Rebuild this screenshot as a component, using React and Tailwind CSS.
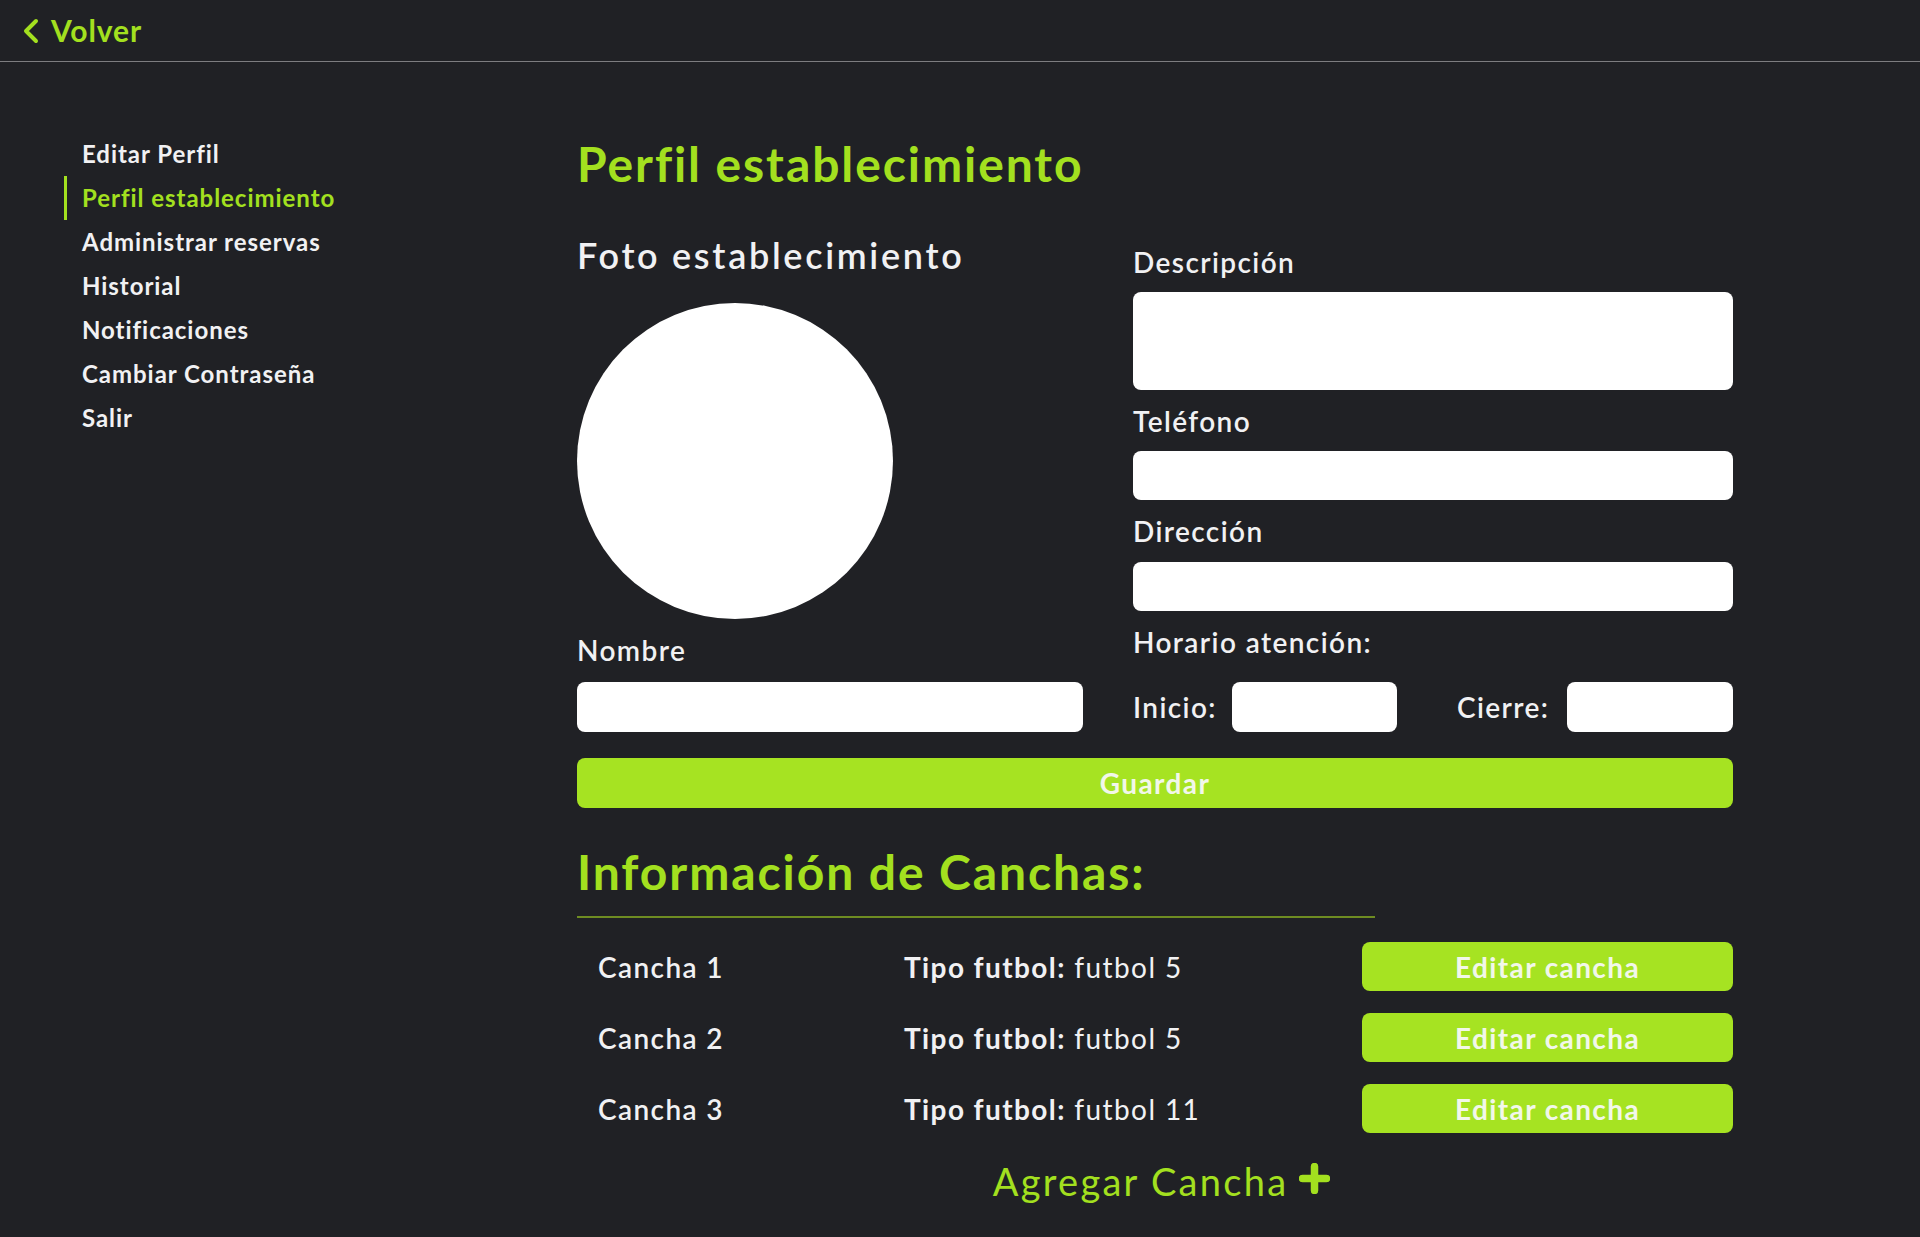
import React from "react";

const LIME_TEXT = "text-[#a3e01f]";

function Sidebar() {
  const items = [
    "Editar Perfil",
    "Perfil establecimiento",
    "Administrar reservas",
    "Historial",
    "Notificaciones",
    "Cambiar Contraseña",
    "Salir",
  ];
  return (
    <aside className="w-[577px] shrink-0 pl-[64px] pt-[70px]">
      <ul className="flex flex-col">
        {items.map((it) => {
          const active = it === "Perfil establecimiento";
          return (
            <li
              key={it}
              className={
                active
                  ? "h-[44px] flex items-center border-l-[3px] border-[#a3e01f] pl-[15px] text-[24px] font-bold tracking-[0.04em] text-[#a3e01f]"
                  : "h-[44px] flex items-center border-l-[3px] border-transparent pl-[15px] text-[24px] font-bold tracking-[0.04em] text-[#f1f1f3]"
              }
            >
              {it}
            </li>
          );
        })}
      </ul>
    </aside>
  );
}

function Label({ children, className = "" }) {
  return (
    <div className={"text-[28px] leading-[28px] font-semibold tracking-[0.05em] text-[#f1f1f3] " + className}>
      {children}
    </div>
  );
}

function Cancha({ name, tipo }) {
  return (
    <div className="h-[49px] flex items-center">
      <div className="w-[327px] pl-[21px] text-[28px] font-semibold tracking-[0.05em] text-[#f1f1f3]">{name}</div>
      <div className="flex-1 text-[28px] tracking-[0.05em] text-[#f1f1f3]">
        <span className="font-bold">Tipo futbol:</span>{" "}
        <span className="font-normal">{tipo}</span>
      </div>
      <button className="w-[371px] h-[49px] rounded-[8px] bg-[#a6e322] text-[28px] font-bold tracking-[0.05em] text-[#f2f7ea]">
        Editar cancha
      </button>
    </div>
  );
}

export default function App() {
  return (
    <div className="min-h-screen bg-[#202125] font-['Lato','Noto_Sans',sans-serif]">
      <header className="h-[62px] border-b border-[#7d7d80] flex items-center pl-[22px] gap-[11px]">
        <svg width="18" height="26" viewBox="0 0 18 26" className="shrink-0">
          <path d="M14 3 L4 13 L14 23" fill="none" stroke="#a3e01f" strokeWidth="4" strokeLinecap="round" strokeLinejoin="round" />
        </svg>
        <span className={"text-[30px] font-bold tracking-[0.03em] " + LIME_TEXT}>Volver</span>
      </header>

      <div className="flex">
        <Sidebar />

        <main className="w-[1156px] shrink-0 pt-[78px] pb-[30px]">
          <h1 className={"text-[48px] leading-[48px] font-bold tracking-[0.04em] " + LIME_TEXT}>Perfil establecimiento</h1>

          <div className="mt-[49px] flex items-end justify-between">
            <div className="w-[506px] flex flex-col">
              <div className="text-[36px] leading-[36px] font-semibold tracking-[0.075em] text-[#f1f1f3]">Foto establecimiento</div>
              <div className="mt-[30px] w-[316px] h-[316px] rounded-full bg-white"></div>
              <Label className="mt-[17px]">Nombre</Label>
              <input className="mt-[18px] h-[50px] w-full rounded-[8px] bg-white outline-none px-3" />
            </div>

            <div className="w-[600px] flex flex-col">
              <Label>Descripción</Label>
              <textarea className="mt-[16px] h-[98px] w-full rounded-[8px] bg-white outline-none resize-none p-3"></textarea>
              <Label className="mt-[17px]">Teléfono</Label>
              <input className="mt-[16px] h-[49px] w-full rounded-[8px] bg-white outline-none px-3" />
              <Label className="mt-[17px]">Dirección</Label>
              <input className="mt-[17px] h-[49px] w-full rounded-[8px] bg-white outline-none px-3" />
              <Label className="mt-[17px]">Horario atención:</Label>
              <div className="mt-[26px] h-[50px] flex items-center">
                <div className="w-[99px] text-[28px] font-semibold tracking-[0.05em] text-[#f1f1f3]">Inicio:</div>
                <input className="w-[165px] h-[50px] rounded-[8px] bg-white outline-none px-3" />
                <div className="ml-[60px] w-[110px] text-[28px] font-semibold tracking-[0.05em] text-[#f1f1f3]">Cierre:</div>
                <input className="w-[166px] h-[50px] rounded-[8px] bg-white outline-none px-3" />
              </div>
            </div>
          </div>

          <button className="mt-[26px] h-[50px] w-full rounded-[8px] bg-[#a6e322] text-[28px] font-bold tracking-[0.05em] text-[#f2f7ea]">
            Guardar
          </button>

          <h2 className={"mt-[40px] text-[48px] leading-[48px] font-bold tracking-[0.04em] " + LIME_TEXT}>Información de Canchas:</h2>
          <div className="mt-[20px] h-[2px] w-[798px] bg-[#6e8c22]"></div>

          <div className="mt-[24px] flex flex-col gap-[22px]">
            <Cancha name="Cancha 1" tipo="futbol 5" />
            <Cancha name="Cancha 2" tipo="futbol 5" />
            <Cancha name="Cancha 3" tipo="futbol 11" />
          </div>

          <div className="mt-[29px] pl-[13px] flex items-center justify-center gap-[11px]">
            <span className={"text-[38px] leading-[38px] font-normal tracking-[0.06em] " + LIME_TEXT}>Agregar Cancha</span>
            <svg width="31" height="31" viewBox="0 0 31 31" className="-mt-[6px]">
              <path d="M15.5 3.5 V27.5 M3.5 15.5 H27.5" fill="none" stroke="#a3e01f" strokeWidth="7.5" strokeLinecap="round" />
            </svg>
          </div>
        </main>
      </div>
    </div>
  );
}
